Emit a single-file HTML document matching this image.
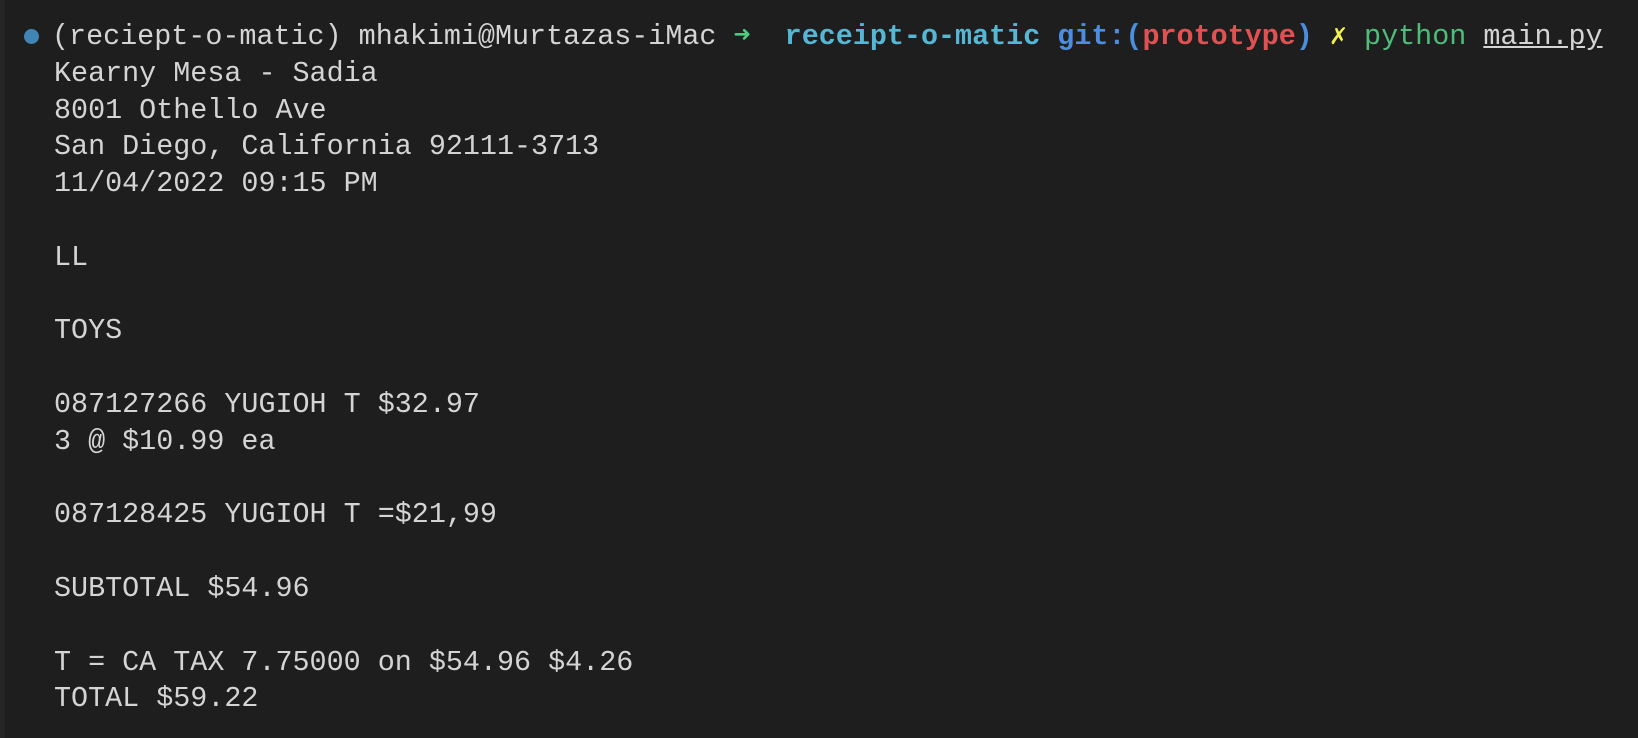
<!DOCTYPE html>
<html><head><meta charset="utf-8"><style>
html,body{margin:0;padding:0;width:1638px;height:738px;background:#1e1e1e;overflow:hidden}
.strip{position:absolute;left:0;top:0;width:5px;height:738px;background:#252526}
.dot{position:absolute;left:24px;top:29px;width:15px;height:15px;border-radius:50%;background:#3f86b4}
pre{position:absolute;left:54px;top:19px;margin:0;font-family:"Liberation Mono","DejaVu Sans Mono",monospace;font-size:28.4px;line-height:36.8px;color:#d4d4d4;white-space:pre}
.l1{margin-left:-2px}
.g{color:#4ec97e}.c{color:#56b6d6;font-weight:bold}.b{color:#4b8ee0;font-weight:bold}.r{color:#e05252;font-weight:bold}.y{color:#f2f24e}.p{color:#4fbd7a}.u{text-decoration:underline}
</style></head><body>
<div class="strip"></div>
<div class="dot"></div>
<pre><span class="l1">(reciept-o-matic) mhakimi@Murtazas-iMac <span class="g">➜</span>  <span class="c">receipt-o-matic</span> <span class="b">git:(</span><span class="r">prototype</span><span class="b">)</span> <span class="y">✗</span> <span class="p">python</span> <span class="u">main.py</span></span>
Kearny Mesa - Sadia
8001 Othello Ave
San Diego, California 92111-3713
11/04/2022 09:15 PM

LL

TOYS

087127266 YUGIOH T $32.97
3 @ $10.99 ea

087128425 YUGIOH T =$21,99

SUBTOTAL $54.96

T = CA TAX 7.75000 on $54.96 $4.26
TOTAL $59.22</pre>
</body></html>
